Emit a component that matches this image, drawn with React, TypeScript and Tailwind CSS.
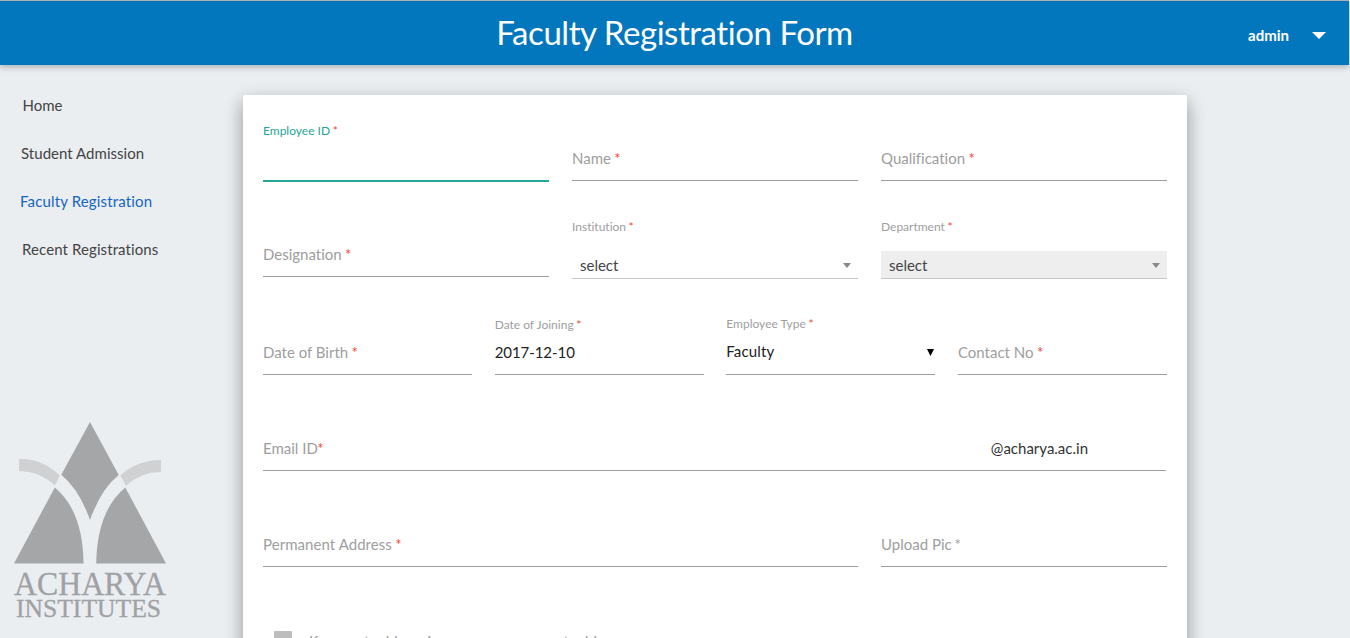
import type { ReactNode } from "react";

function Star() {
  return <span className="-ml-[0.5px] text-[#f44336]">*</span>;
}

type FieldProps = {
  label: ReactNode;
  value?: string;
  width: string;
  floating?: boolean;
  active?: boolean;
  caret?: boolean;
  suffix?: string;
};

function Field({ label, value, width, floating, active, caret, suffix }: FieldProps) {
  return (
    <div className={`flex flex-col justify-end ${width}`}>
      {floating && (
        <div
          className={`h-[18px] text-[12px] leading-[18px] ${
            active ? "mb-[9px] text-[#26a69a]" : caret ? "mb-[9px] text-[#9e9e9e]" : "mb-[8px] text-[#9e9e9e]"
          }`}
        >
          {label}
        </div>
      )}
      <div
        className={
          active
            ? "-mb-px h-[33px] border-b-2 border-[#26a69a]"
            : "flex h-[33px] justify-between border-b border-[#9e9e9e] leading-5"
        }
      >
        {!floating && <span className="text-[#9e9e9e]">{label}</span>}
        {value && (
          <span className={caret ? "-mt-px tracking-[0.14px] text-[#212121]" : "tracking-[-0.06px] text-[#212121]"}>
            {value}
          </span>
        )}
        {caret && (
          <svg className="mt-[7px] h-[7px] w-[9px]" viewBox="0 0 9 7">
            <path d="M1 0H8L4.5 7Z" fill="#000" />
          </svg>
        )}
        {suffix && <span className="mr-[78px] text-[#333]">{suffix}</span>}
      </div>
    </div>
  );
}

function SelectField({ label, disabled }: { label: string; disabled?: boolean }) {
  return (
    <div className="flex w-[286px] flex-col justify-end">
      <div className="mb-[15px] h-[18px] text-[12px] leading-[18px] text-[#9e9e9e]">
        {label} <Star />
      </div>
      <div
        className={`flex h-[28px] items-center justify-between border-b border-[#c6c6c6] pr-[6px] pl-2 text-[#444] ${
          disabled ? "bg-[#eee]" : ""
        }`}
      >
        <span className="leading-5">select</span>
        <svg className="mt-px h-[5px] w-[10px]" viewBox="0 0 10 5">
          <path d="M1 0H9L5 5Z" fill="#888" />
        </svg>
      </div>
    </div>
  );
}

function Logo() {
  return (
    <svg className="h-[200px] w-[160px]" viewBox="10 420 160 200">
      <g fill="#a5a6a8">
        <path d="M90 422L118.7 475Q101 489 90 520Q79 489 61.3 474.7Z" />
        <path d="M54.8 487.5L14 563.5H83.5Q83 511 54.8 487.5Z" />
        <path d="M125.3 487.5L166 563.5H96.2Q97 511 125.3 487.5Z" />
      </g>
      <g fill="#d0d1d3">
        <path d="M19 459Q42 458 59.7 475.5L55 485.5Q39 471 19 471.3Z" />
        <path d="M161 460Q137 460 120.3 475.5L126 485.8Q141 472 161 472Z" />
      </g>
      <g fill="#a0a1a3" stroke="#a0a1a3" strokeWidth="0.3" fontFamily="Liberation Serif, serif">
        <text x="14" y="595" fontSize="33" textLength="152" lengthAdjust="spacingAndGlyphs">ACHARYA</text>
        <text x="16" y="617" fontSize="25.5" textLength="145" lengthAdjust="spacingAndGlyphs">INSTITUTES</text>
      </g>
    </svg>
  );
}

export default function App() {
  return (
    <div className="flex h-[638px] w-[1350px] flex-col overflow-hidden bg-[#eaeef1] font-['Lato',sans-serif] text-[15px] [font-variant-ligatures:none]">
      <header className="z-10 grid h-[65px] w-[1349px] shrink-0 grid-cols-[1fr_auto_1fr] items-center border-t border-[#b0b0b0] bg-[#0277bd] text-white shadow-[0_2px_5px_0_rgba(0,0,0,0.16),0_2px_8px_0_rgba(0,0,0,0.12)]">
        <h1 className="col-start-2 -mt-[2px] text-[33px] leading-[64px] tracking-[-0.45px]">Faculty Registration Form</h1>
        <div className="mt-1 mr-[23px] flex items-center justify-end gap-[23px] font-bold">
          <span>admin</span>
          <svg className="h-[7px] w-[14px]" viewBox="0 0 14 7">
            <path d="M0 0H14L7 7Z" fill="#fff" />
          </svg>
        </div>
      </header>

      <div className="flex min-h-0 flex-1">
        <aside className="flex w-[243px] shrink-0 flex-col justify-between pt-4 pb-[18px]">
          <nav className="flex flex-col leading-[48px] text-[#444]">
            <a className="pl-[22.5px]">Home</a>
            <a className="pl-[21px] tracking-[0.03px]">Student Admission</a>
            <a className="pl-[20px] tracking-[0.15px] text-[#1565c0]">Faculty Registration</a>
            <a className="pl-[22px] tracking-[0.1px]">Recent Registrations</a>
          </nav>
          <div className="pl-[10px]">
            <Logo />
          </div>
        </aside>

        <main className="mt-[30px] h-[700px] w-[944px] rounded-[2px] bg-white px-5 shadow-[0_8px_17px_0_rgba(0,0,0,0.2),0_6px_20px_0_rgba(0,0,0,0.19)]">
          <div className="flex h-[86px] justify-between">
            <Field width="w-[286px]" label={<>Employee ID <Star /></>} floating active />
            <Field width="w-[286px]" label={<>Name <Star /></>} />
            <Field width="w-[286px]" label={<>Qualification <Star /></>} />
          </div>
          <div className="flex h-[98px] justify-between">
            <div className="flex pb-0.5">
              <Field width="w-[286px]" label={<>Designation <Star /></>} />
            </div>
            <SelectField label="Institution" />
            <SelectField label="Department" disabled />
          </div>
          <div className="flex h-[96px] justify-between">
            <Field width="w-[209px]" label={<>Date of Birth <Star /></>} />
            <Field width="w-[209px]" label={<>Date of Joining <Star /></>} value="2017-12-10" floating />
            <Field width="w-[209px]" label={<>Employee Type <Star /></>} value="Faculty" floating caret />
            <Field width="w-[209px]" label={<>Contact No <Star /></>} />
          </div>
          <div className="flex h-[96px]">
            <Field width="w-[903px]" label={<>Email ID<Star /></>} suffix="@acharya.ac.in" />
          </div>
          <div className="flex h-[96px] justify-between">
            <Field width="w-[595px]" label={<span className="tracking-[0.06px]">Permanent Address <Star /></span>} />
            <Field width="w-[286px]" label={<>Upload Pic <span className="-ml-px">*</span></>} />
          </div>
          <label className="flex pt-16 pl-[11px] text-[#9e9e9e]">
            <span className="h-[18px] w-[18px] rounded-[1px] bg-[#bdbdbd]" />
            <span className="ml-[17px] leading-5">If current address is same as permanent address</span>
          </label>
        </main>
      </div>
    </div>
  );
}
